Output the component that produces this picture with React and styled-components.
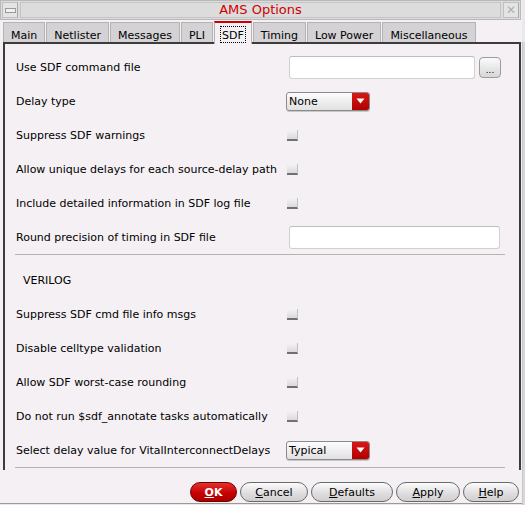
import React from "react";
import styled, { createGlobalStyle, css } from "styled-components";

const Global = createGlobalStyle`
  html, body { margin: 0; padding: 0; }
  body {
    width: 525px; height: 505px; overflow: hidden;
    background: #ece8ec;
    font-family: "DejaVu Sans", "Liberation Sans", sans-serif;
    font-size: 11px; color: #000;
  }
`;

const Desk = styled.div`
  display: flex;
  width: 525px;
  height: 505px;
`;

const Window = styled.div`
  width: 522px;
  height: 504px;
  background: #f4f0f4;
  border-bottom: 1px solid #9a9a9a;
  display: flex;
  flex-direction: column;
  box-sizing: border-box;
`;

const Behind = styled.div`
  flex: 1;
  background: #d8d8d8;
  margin-top: 42px;
  border-left: 1px solid #c8c8c8;
`;

const TitleBar = styled.div`
  height: 20px;
  width: 521px;
  background: #dcdcdc;
  border: 1px solid #b8b8b8;
  box-sizing: border-box;
  display: flex;
  align-items: center;
  padding: 0 1px;
  gap: 2px;
`;

const WinBtn = styled.div`
  width: 16px;
  height: 16px;
  box-sizing: border-box;
  border: 1px solid #c0c0c0;
  border-right-color: #a8a8a8;
  background: #e4e4e4;
  display: flex;
  align-items: center;
  justify-content: center;
  color: #b0b0b0;
  font-size: 12px;
`;

const MinBar = styled.div`
  width: 9px;
  height: 3px;
  border: 1px solid #9a9a9a;
  background: #f0f0f0;
`;

const Title = styled.div`
  flex: 1;
  height: 16px;
  border: 1px solid #c4c4c4;
  box-sizing: border-box;
  text-align: center;
  color: #d00000;
  font-size: 13px;
  line-height: 14px;
`;

const TabBar = styled.div`
  height: 22px;
  display: flex;
  align-items: flex-end;
  padding-left: 3px;
  position: relative;
  z-index: 1;
`;

const Tab = styled.div`
  height: 20px;
  box-sizing: border-box;
  border: 1px solid #b4b4b4;
  border-bottom: none;
  background: #d4d2d4;
  padding: 3px 6px 0;
  margin-right: 1px;
  display: flex;
  align-items: center;
  ${(p) =>
    p.$active &&
    css`
      height: 23px;
      margin-bottom: -2px;
      background: #f4f0f4;
      border-top: 2px solid #d00000;
      padding-top: 1px;
    `}
`;

const TabText = styled.span`
  line-height: 13px;
  padding: 2px 1px 0;
  ${(p) => p.$active && css`outline: 1px dotted #000; outline-offset: 0;`}
`;

const Panel = styled.div`
  height: 428px;
  margin-left: 3px;
  margin-right: 1px;
  border-left: 2px solid #3c3c3c;
  border-top: 2px solid #3c3c3c;
  border-right: 2px solid #3c3c3c;
  box-sizing: border-box;
  padding: 6px 15px 0 10px;
  display: flex;
  flex-direction: column;
`;

const Row = styled.div`
  height: 34px;
  flex-shrink: 0;
  display: grid;
  grid-template-columns: 270px 1fr;
  align-items: center;
  padding-left: 1px;
`;

const Label = styled.div`
  white-space: nowrap;
`;

const Controls = styled.div`
  display: flex;
  align-items: center;
  gap: 4px;
`;

const TextField = styled.div`
  width: ${(p) => p.$w}px;
  height: 23px;
  margin-left: 3px;
  box-sizing: border-box;
  background: #fff;
  border: 1px solid #d0d0d0;
  border-top-color: #bdbdbd;
  border-radius: 3px;
`;

const SmallBtn = styled.div`
  width: 22px;
  height: 21px;
  box-sizing: border-box;
  border: 1px solid #9c9c9c;
  border-radius: 4px;
  background: linear-gradient(#fbfbfb, #d8d6d8);
  display: flex;
  align-items: flex-end;
  justify-content: center;
  font-size: 9px;
  line-height: 13px;
`;

const Select = styled.div`
  width: 84px;
  height: 19px;
  box-sizing: border-box;
  border: 1px solid #8a8a8a;
  border-radius: 3px;
  background: linear-gradient(#fdfdfd, #e2e0e2);
  display: flex;
  overflow: hidden;
  box-shadow: 0 1px 0 #c8c8c8;
`;

const SelectText = styled.div`
  flex: 1;
  padding-left: 2px;
  line-height: 17px;
`;

const SelectArrow = styled.div`
  width: 17px;
  background: linear-gradient(#d81818, #b00000);
  display: flex;
  align-items: center;
  justify-content: center;
`;

const Check = styled.div`
  width: 11px;
  height: 11px;
  margin-left: 1px;
  box-sizing: border-box;
  background: linear-gradient(#f4f4f4, #dcd8dc);
  border-bottom: 2px solid #707070;
  border-right: 1px solid #c0c0c0;
`;

const Sep = styled.div`
  height: 1px;
  background: #b4b4b4;
  width: 490px;
  flex-shrink: 0;
`;

const SectionHead = styled.div`
  height: 34px;
  flex-shrink: 0;
  margin-top: 8px;
  display: flex;
  align-items: center;
  padding-left: 8px;
`;

const ButtonRow = styled.div`
  flex: 1;
  display: flex;
  justify-content: flex-end;
  align-items: flex-start;
  padding-top: 12px;
  padding-right: 3px;
  gap: 3px;
`;

const Button = styled.div`
  height: 20px;
  width: ${(p) => p.$w}px;
  box-sizing: border-box;
  border: 1px solid #6a6a6a;
  border-radius: 10px;
  background: linear-gradient(#fcfcfc, #dedcde 60%, #d0ced0);
  display: flex;
  align-items: center;
  justify-content: center;
  font-size: 11px;
  ${(p) =>
    p.$primary &&
    css`
      background: linear-gradient(#e43030, #c80000 55%, #a80000);
      border-color: #700000;
      color: #fff;
      font-weight: bold;
    `}
`;

const Mn = styled.span`
  text-decoration: underline;
`;

const Arrow = () => (
  <svg width="9" height="6" viewBox="0 0 9 6">
    <path d="M0.5 0.5 L8.5 0.5 L4.5 5.5 Z" fill="#fff" />
  </svg>
);

const Dropdown = ({ value }) => (
  <Select>
    <SelectText>{value}</SelectText>
    <SelectArrow>
      <Arrow />
    </SelectArrow>
  </Select>
);

const tabs = ["Main", "Netlister", "Messages", "PLI", "SDF", "Timing", "Low Power", "Miscellaneous"];

export default function App() {
  return (
    <>
      <Global />
      <Desk>
        <Window>
          <TitleBar>
            <WinBtn>
              <MinBar />
            </WinBtn>
            <Title>AMS Options</Title>
            <WinBtn>✕</WinBtn>
          </TitleBar>
          <TabBar>
            {tabs.map((t) => (
              <Tab key={t} $active={t === "SDF"}>
                <TabText $active={t === "SDF"}>{t}</TabText>
              </Tab>
            ))}
          </TabBar>
          <Panel>
            <Row>
              <Label>Use SDF command file</Label>
              <Controls>
                <TextField $w={186} />
                <SmallBtn>...</SmallBtn>
              </Controls>
            </Row>
            <Row>
              <Label>Delay type</Label>
              <Controls>
                <Dropdown value="None" />
              </Controls>
            </Row>
            <Row>
              <Label>Suppress SDF warnings</Label>
              <Controls>
                <Check />
              </Controls>
            </Row>
            <Row>
              <Label>Allow unique delays for each source-delay path</Label>
              <Controls>
                <Check />
              </Controls>
            </Row>
            <Row>
              <Label>Include detailed information in SDF log file</Label>
              <Controls>
                <Check />
              </Controls>
            </Row>
            <Row>
              <Label>Round precision of timing in SDF file</Label>
              <Controls>
                <TextField $w={211} />
              </Controls>
            </Row>
            <Sep />
            <SectionHead>VERILOG</SectionHead>
            <Row>
              <Label>Suppress SDF cmd file info msgs</Label>
              <Controls>
                <Check />
              </Controls>
            </Row>
            <Row>
              <Label>Disable celltype validation</Label>
              <Controls>
                <Check />
              </Controls>
            </Row>
            <Row>
              <Label>Allow SDF worst-case rounding</Label>
              <Controls>
                <Check />
              </Controls>
            </Row>
            <Row>
              <Label>Do not run $sdf_annotate tasks automatically</Label>
              <Controls>
                <Check />
              </Controls>
            </Row>
            <Row>
              <Label>Select delay value for VitalInterconnectDelays</Label>
              <Controls>
                <Dropdown value="Typical" />
              </Controls>
            </Row>
            <Sep />
          </Panel>
          <ButtonRow>
            <Button $primary $w={47}>
              <Mn>O</Mn>K
            </Button>
            <Button $w={68}>
              <Mn>C</Mn>ancel
            </Button>
            <Button $w={82}>
              <Mn>D</Mn>efaults
            </Button>
            <Button $w={64}>
              <Mn>A</Mn>pply
            </Button>
            <Button $w={56}>
              <Mn>H</Mn>elp
            </Button>
          </ButtonRow>
        </Window>
        <Behind />
      </Desk>
    </>
  );
}
